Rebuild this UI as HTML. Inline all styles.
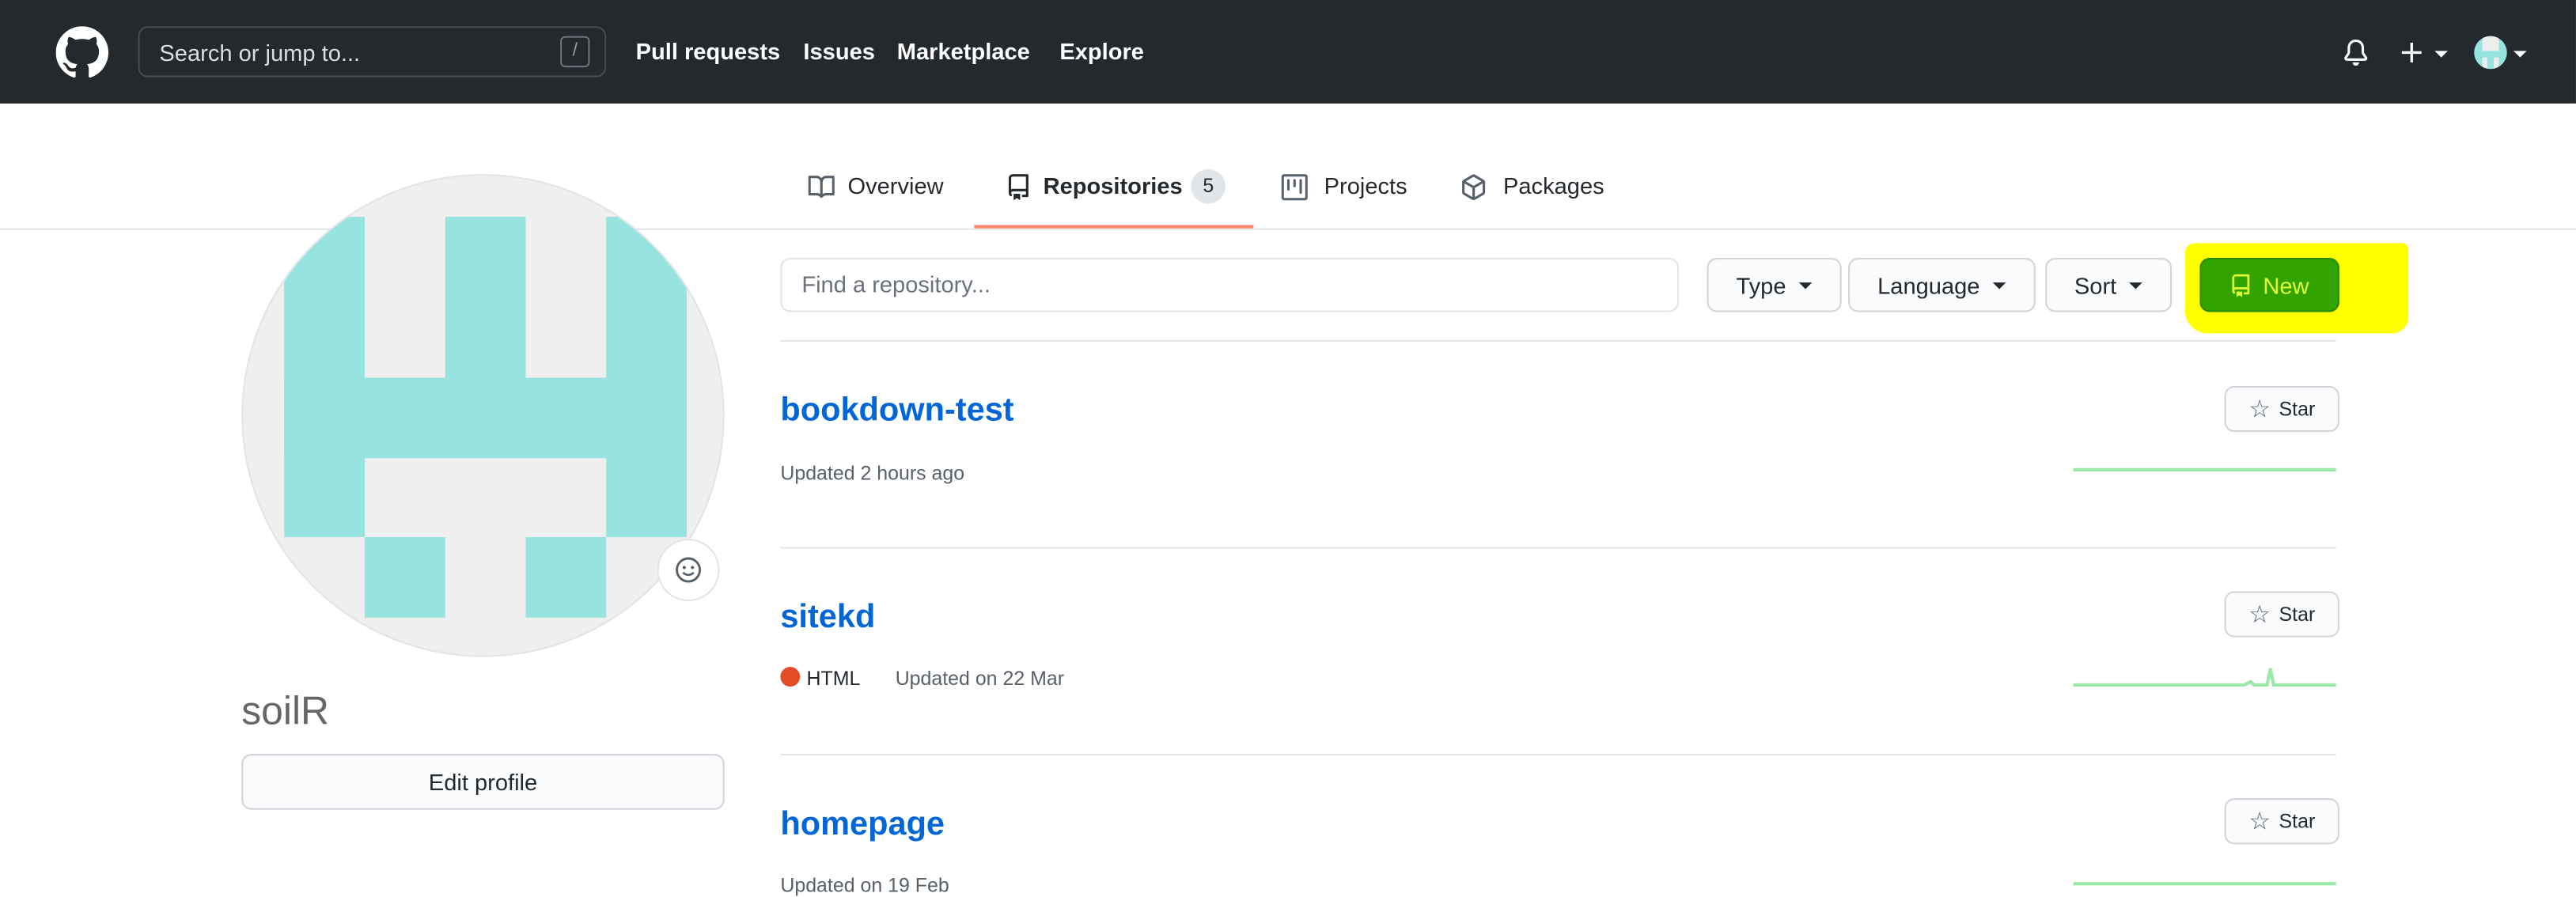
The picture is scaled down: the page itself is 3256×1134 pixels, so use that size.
<!DOCTYPE html>
<html><head><meta charset="utf-8"><style>
html,body{margin:0;padding:0;width:3256px;height:1126px;overflow:hidden;background:#fff;font-family:"Liberation Sans",sans-serif}
#w{position:absolute;left:0;top:0;width:1568px;height:542px;transform:scale(2.0765);transform-origin:0 0}
.a{position:absolute}
.hdr{left:0;top:0;width:1568px;height:63px;background:#24292e}
.nav{color:#fff;font-weight:bold;font-size:14px;top:23px}
.tab{top:105px;font-size:14px;color:#24292e}
.btn{background:#fafbfc;border:1px solid #d1d5da;border-radius:6px;box-sizing:border-box;font-size:14px;color:#24292e;display:flex;align-items:center;justify-content:center}
.car{display:inline-block;width:0;height:0;border-left:4px solid transparent;border-right:4px solid transparent;border-top:4px solid #24292e;margin-left:8px}
.rn{font-size:20px;font-weight:bold;color:#0366d6;left:475px}
.meta{font-size:12px;color:#586069}
.div{left:475px;width:947px;height:1px;background:#e1e4e8}
.cell{position:absolute;width:49px;height:49px;background:#96e3df}
</style></head><body><div id="w">
<div class="a hdr"></div>
<svg class="a" style="left:34px;top:16px" width="32" height="32" viewBox="0 0 16 16"><path fill="#fff" fill-rule="evenodd" d="M8 0C3.58 0 0 3.58 0 8c0 3.540 2.29 6.53 5.47 7.59.4.07.55-.17.55-.38 0-.19-.01-.82-.01-1.49-2.01.37-2.530-.49-2.69-.94-.09-.23-.48-.94-.82-1.13-.28-.15-.68-.52-.01-.53.63-.01 1.08.58 1.23.82.72 1.21 1.87.87 2.33.66.07-.52.28-.87.51-1.07-1.78-.2-3.64-.89-3.64-3.95 0-.87.31-1.59.82-2.15-.08-.2-.36-1.02.08-2.12 0 0 .67-.21 2.2.82.64-.18 1.32-.27 2-.27.68 0 1.36.09 2 .27 1.53-1.04 2.2-.82 2.2-.82.44 1.1.16 1.92.08 2.12.51.56.82 1.27.82 2.15 0 3.07-1.87 3.75-3.65 3.95.29.25.54.73.54 1.48 0 1.07-.01 1.93-.01 2.2 0 .21.15.46.55.38A8.013 8.013 0 0016 8c0-4.42-3.58-8-8-8z"/></svg>
<div class="a" style="left:84px;top:16px;width:285px;height:31px;border:1px solid #444d56;border-radius:6px;box-sizing:border-box"></div>
<div class="a" style="left:97px;top:24px;font-size:14px;color:#ddd">Search or jump to...</div>
<div class="a" style="left:341px;top:22px;width:18px;height:19px;border:1px solid #6a737d;border-radius:3px;box-sizing:border-box;color:#959da5;font-size:11px;text-align:center;line-height:17px">/</div>
<div class="a nav" style="left:387px">Pull requests</div>
<div class="a nav" style="left:489px">Issues</div>
<div class="a nav" style="left:546px">Marketplace</div>
<div class="a nav" style="left:645px">Explore</div>
<svg class="a" style="left:1426px;top:24px" width="16" height="16" viewBox="0 0 16 16"><path fill="#fff" fill-rule="evenodd" d="M8 16a2 2 0 001.985-1.75c.017-.137-.097-.25-.235-.25h-3.5c-.138 0-.252.113-.235.25A2 2 0 008 16zM3 5a5 5 0 0110 0v2.947c0 .05.015.098.042.139l1.703 2.555A1.519 1.519 0 0113.482 13H2.518a1.518 1.518 0 01-1.263-2.360l1.703-2.554A.25.25 0 003 7.947V5zm5-3.5A3.5 3.5 0 004.5 5v2.947c0 .346-.102.683-.294.97l-1.703 2.556a.018.018 0 00.015.027h10.964a.017.017 0 00.015-.027l-1.703-2.555a1.75 1.75 0 01-.294-.97V5A3.5 3.5 0 008 1.5z"/></svg>
<svg class="a" style="left:1461px;top:25px" width="14" height="14" viewBox="0 0 14 14"><path stroke="#fff" stroke-width="1.6" d="M7 1v12M1 7h12"/></svg>
<div class="a" style="left:1482px;top:31px;border-left:4px solid transparent;border-right:4px solid transparent;border-top:4px solid #fff"></div>
<div class="a" style="left:1506px;top:22px;width:20px;height:20px;border-radius:50%;background:#96e3df;overflow:hidden"><div class="a" style="left:5px;top:0;width:10px;height:9px;background:#eee"></div><div class="a" style="left:5px;top:13px;width:3px;height:7px;background:#eee"></div><div class="a" style="left:12px;top:13px;width:3px;height:7px;background:#eee"></div></div>
<div class="a" style="left:1530px;top:31px;border-left:4px solid transparent;border-right:4px solid transparent;border-top:4px solid #fff"></div>

<div class="a" style="left:0;top:139px;width:1568px;height:1px;background:#e1e4e8"></div>
<svg class="a" style="left:492px;top:106px" width="16" height="16" viewBox="0 0 16 16"><path fill="#586069" fill-rule="evenodd" d="M0 1.75A.75.75 0 01.75 1h4.253c1.227 0 2.317.59 3 1.501A3.744 3.744 0 0111.006 1h4.245a.75.75 0 01.75.75v10.5a.75.75 0 01-.75.75h-4.507a2.250 2.250 0 00-1.591.659l-.622.621a.75.75 0 01-1.060 0l-.622-.621A2.250 2.250 0 005.258 13H.75a.75.75 0 01-.75-.75V1.75zm8.755 3a2.250 2.250 0 012.250-2.250H14.5v9h-3.757c-.71 0-1.4.201-1.992.572l.004-7.322zm-1.504 7.324l.004-5.073-.002-2.253A2.250 2.250 0 005.003 2.5H1.5v9h3.757a3.750 3.750 0 011.994.574z"/></svg>
<div class="a tab" style="left:516px">Overview</div>
<svg class="a" style="left:612px;top:106px" width="16" height="16" viewBox="0 0 16 16"><path fill="#24292e" fill-rule="evenodd" d="M2 2.5A2.5 2.5 0 014.5 0h8.75a.75.75 0 01.75.75v12.5a.75.75 0 01-.75.75h-2.5a.75.75 0 110-1.5h1.75v-2h-8a1 1 0 00-.714 1.7.75.75 0 01-1.072 1.05A2.495 2.495 0 012 11.5v-9zm10.5-1V9h-8c-.356 0-.694.074-1 .208V2.5a1 1 0 011-1h8zM5 12.25v3.25a.25.25 0 00.4.2l1.45-1.087a.25.25 0 01.3 0L8.6 15.7a.25.25 0 00.4-.2v-3.25a.25.25 0 00-.25-.25h-3.5a.25.25 0 00-.25.25z"/></svg>
<div class="a tab" style="left:635px;font-weight:bold">Repositories</div>
<div class="a" style="left:725px;top:103px;width:21px;height:21px;border-radius:11px;background:#e1e4e8;font-size:12px;text-align:center;line-height:21px;color:#24292e">5</div>
<div class="a" style="left:593px;top:137px;width:170px;height:2px;background:#f9826c"></div>
<svg class="a" style="left:780px;top:106px" width="16" height="16" viewBox="0 0 16 16"><path fill="#586069" fill-rule="evenodd" d="M1.75 0A1.75 1.75 0 000 1.75v12.5C0 15.216.784 16 1.75 16h12.5A1.75 1.75 0 0016 14.25V1.75A1.75 1.75 0 0014.25 0H1.75zM1.5 1.75a.25.25 0 01.25-.25h12.5a.25.25 0 01.25.25v12.5a.25.25 0 01-.25.25H1.75a.25.25 0 01-.25-.25V1.75zM11.75 3a.75.75 0 00-.75.75v7.5a.75.75 0 001.5 0v-7.5a.75.75 0 00-.75-.75zm-8.25.75a.75.75 0 011.5 0v5.5a.75.75 0 01-1.5 0v-5.5zM8 3a.75.75 0 00-.75.75v3.5a.75.75 0 001.5 0v-3.5A.75.75 0 008 3z"/></svg>
<div class="a tab" style="left:806px">Projects</div>
<svg class="a" style="left:889px;top:106px" width="16" height="16" viewBox="0 0 16 16"><path fill="#586069" fill-rule="evenodd" d="M8.878.392a1.75 1.75 0 00-1.756 0l-5.25 3.045A1.75 1.75 0 001 4.951v6.098c0 .624.332 1.2.872 1.514l5.25 3.045a1.75 1.75 0 001.756 0l5.25-3.045c.54-.313.872-.89.872-1.514V4.951c0-.624-.332-1.2-.872-1.514L8.878.392zM7.875 1.69a.25.25 0 01.25 0l4.63 2.685L8 7.133 3.245 4.375l4.63-2.685zM2.5 5.677v5.372c0 .09.047.171.125.216l4.625 2.683V8.432L2.5 5.677zm6.25 8.271l4.625-2.683a.25.25 0 00.125-.216V5.677L8.75 8.432v5.516z"/></svg>
<div class="a tab" style="left:915px">Packages</div>

<div class="a" style="left:147px;top:106px;width:294px;height:294px;border-radius:50%;background:#efefef;overflow:hidden;border:1px solid #e1e4e8;box-sizing:border-box">
<div style="position:absolute;left:-148px;top:-107px">
<div class="cell" style="left:173px;top:132px;height:195px"></div>
<div class="cell" style="left:271px;top:132px;height:146px"></div>
<div class="cell" style="left:369px;top:132px;height:195px"></div>
<div class="cell" style="left:173px;top:230px;width:244px"></div>
<div class="cell" style="left:222px;top:327px"></div>
<div class="cell" style="left:320px;top:327px"></div>
</div></div>
<div class="a" style="left:400px;top:328px;width:38px;height:38px;border-radius:50%;background:#fff;border:1px solid #e1e4e8;box-sizing:border-box"></div>
<svg class="a" style="left:411px;top:339px" width="16" height="16" viewBox="0 0 16 16"><circle cx="8" cy="8" r="7" fill="none" stroke="#586069" stroke-width="1.4"/><circle cx="5.5" cy="6.5" r="1" fill="#586069"/><circle cx="10.5" cy="6.5" r="1" fill="#586069"/><path d="M4.8 9.5c1.5 2 4.9 2 6.4 0" fill="none" stroke="#586069" stroke-width="1.3"/></svg>
<div class="a" style="left:147px;top:420px;font-size:24px;color:#666;font-weight:300">soilR</div>
<div class="a btn" style="left:147px;top:459px;width:294px;height:34px">Edit profile</div>

<div class="a" style="left:475px;top:157px;width:547px;height:33px;border:1px solid #e1e4e8;border-radius:6px;box-sizing:border-box;font-size:14px;color:#6a737d;padding:7px 12px">Find a repository...</div>
<div class="a btn" style="left:1039px;top:157px;width:82px;height:33px">Type<span class="car"></span></div>
<div class="a btn" style="left:1125px;top:157px;width:114px;height:33px">Language<span class="car"></span></div>
<div class="a btn" style="left:1245px;top:157px;width:77px;height:33px">Sort<span class="car"></span></div>
<div class="a" style="left:1330px;top:148px;width:136px;height:55px;background:#ffff00;border-radius:6px 4px 10px 14px"></div>
<div class="a btn" style="left:1339px;top:157px;width:85px;height:33px;background:#33a300;border-color:#2a8a00;color:#dfff30">
<svg width="14" height="16" viewBox="0 0 16 16" style="margin-right:6px"><path fill="#dfff30" fill-rule="evenodd" d="M2 2.5A2.5 2.5 0 014.5 0h8.75a.75.75 0 01.75.75v12.5a.75.75 0 01-.75.75h-2.5a.75.75 0 110-1.5h1.75v-2h-8a1 1 0 00-.714 1.7.75.75 0 01-1.072 1.05A2.495 2.495 0 012 11.5v-9zm10.5-1V9h-8c-.356 0-.694.074-1 .208V2.5a1 1 0 011-1h8zM5 12.25v3.25a.25.25 0 00.4.2l1.45-1.087a.25.25 0 01.3 0L8.6 15.7a.25.25 0 00.4-.2v-3.25a.25.25 0 00-.25-.25h-3.5a.25.25 0 00-.25.25z"/></svg>New</div>

<div class="a div" style="top:207px"></div>
<div class="a rn" style="top:239px">bookdown-test</div>
<div class="a meta" style="left:475px;top:281px">Updated 2 hours ago</div>
<div class="a div" style="top:333px"></div>
<div class="a rn" style="top:365px">sitekd</div>
<div class="a" style="left:475px;top:406px;width:12px;height:12px;border-radius:50%;background:#e34c26"></div>
<div class="a meta" style="left:491px;top:406px;color:#24292e">HTML</div>
<div class="a meta" style="left:545px;top:406px">Updated on 22 Mar</div>
<div class="a div" style="top:459px"></div>
<div class="a rn" style="top:491px">homepage</div>
<div class="a meta" style="left:475px;top:532px">Updated on 19 Feb</div>

<div class="a btn" style="left:1354px;top:235px;width:70px;height:28px;font-size:12px"><span style="font-size:15px;color:#586069;margin-right:5px">☆</span>Star</div>
<div class="a btn" style="left:1354px;top:360px;width:70px;height:28px;font-size:12px"><span style="font-size:15px;color:#586069;margin-right:5px">☆</span>Star</div>
<div class="a btn" style="left:1354px;top:486px;width:70px;height:28px;font-size:12px"><span style="font-size:15px;color:#586069;margin-right:5px">☆</span>Star</div>
<svg class="a" style="left:1262px;top:280px" width="160" height="262"><g fill="none" stroke="#9be9a8" stroke-width="2"><path d="M0 6H160"/><path d="M0 137H104l4-2 2 2h8l2-10 2 10H160"/><path d="M0 258H160"/></g></svg>
</div></body></html>
